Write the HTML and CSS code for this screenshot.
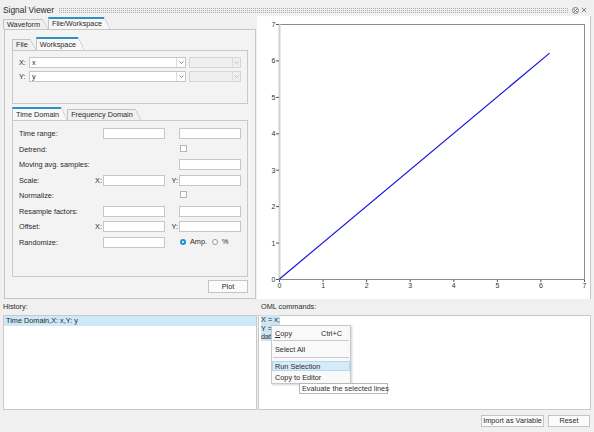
FILE: index.html
```html
<!DOCTYPE html>
<html>
<head>
<meta charset="utf-8">
<title>Signal Viewer</title>
<link rel="stylesheet" href="styles.css">
</head>
<body>
<div class="app">
  <header class="titlebar">
    <span class="title">Signal Viewer</span>
    <span class="grip"></span>
    <svg class="ticon" width="7" height="7" viewBox="0 0 7 7"><circle cx="3.5" cy="3.5" r="3" fill="none" stroke="#707070" stroke-width="0.9"/><path d="M2 2 L5 5 M5 2 L2 5" stroke="#707070" stroke-width="0.9"/></svg>
    <svg class="ticon close" width="6" height="6" viewBox="0 0 6 6"><path d="M0.8 0.8 L5.2 5.2 M5.2 0.8 L0.8 5.2" stroke="#707070" stroke-width="0.9"/></svg>
  </header>

  <div class="main">
    <section class="left">
      <div class="tabrow outer-tabs">
        <div class="tab">Waveform</div>
        <div class="tab active">File/Workspace</div>
      </div>
      <div class="opane">
        <div class="tabrow inner-tabs">
          <div class="tab">File</div>
          <div class="tab active">Workspace</div>
        </div>
        <div class="wspane">
          <div class="wsrow">
            <span class="lbl">X:</span>
            <div class="combo"><span class="cval">x</span><span class="arr"><svg width="5" height="3" viewBox="0 0 5 3"><path d="M0.5 0.5 L2.5 2.5 L4.5 0.5" fill="none" stroke="#707070" stroke-width="0.8"/></svg></span></div>
            <div class="combo dis"><span class="cval"></span><span class="arr"><svg width="5" height="3" viewBox="0 0 5 3"><path d="M0.5 0.5 L2.5 2.5 L4.5 0.5" fill="none" stroke="#b0b0b0" stroke-width="0.8"/></svg></span></div>
          </div>
          <div class="wsrow">
            <span class="lbl">Y:</span>
            <div class="combo"><span class="cval">y</span><span class="arr"><svg width="5" height="3" viewBox="0 0 5 3"><path d="M0.5 0.5 L2.5 2.5 L4.5 0.5" fill="none" stroke="#707070" stroke-width="0.8"/></svg></span></div>
            <div class="combo dis"><span class="cval"></span><span class="arr"><svg width="5" height="3" viewBox="0 0 5 3"><path d="M0.5 0.5 L2.5 2.5 L4.5 0.5" fill="none" stroke="#b0b0b0" stroke-width="0.8"/></svg></span></div>
          </div>
        </div>

        <div class="tabrow inner-tabs td-tabs">
          <div class="tab active">Time Domain</div>
          <div class="tab">Frequency Domain</div>
        </div>
        <div class="tdpane">
          <div class="tdgrid">
            <span class="lbl">Time range:</span>
            <span class="inp c3"></span><span class="inp c5"></span>

            <span class="lbl">Detrend:</span>
            <span class="chk c5"></span>

            <span class="lbl">Moving avg. samples:</span>
            <span class="inp c5"></span>

            <span class="lbl">Scale:</span>
            <span class="axl c2">X:</span><span class="inp c3"></span><span class="axl c4">Y:</span><span class="inp c5"></span>

            <span class="lbl">Normalize:</span>
            <span class="chk c5"></span>

            <span class="lbl">Resample factors:</span>
            <span class="inp c3"></span><span class="inp c5"></span>

            <span class="lbl">Offset:</span>
            <span class="axl c2">X:</span><span class="inp c3"></span><span class="axl c4">Y:</span><span class="inp c5"></span>

            <span class="lbl">Randomize:</span>
            <span class="inp c3"></span>
            <span class="radios c5"><span class="radio on"></span><span class="rtxt">Amp.</span><span class="radio"></span><span class="rtxt">%</span></span>
          </div>
        </div>
        <div class="btnrow"><button class="btn plotbtn">Plot</button></div>
      </div>
    </section>

    <section class="plot">
      <svg width="333" height="283" viewBox="0 0 333 283" font-family="Liberation Sans, Arial, sans-serif" font-size="7" fill="#333">
        <rect x="22.5" y="8.5" width="305" height="255" fill="#fff" stroke="#8c8c8c" stroke-width="1"/>
        <line x1="22.5" y1="8" x2="22.5" y2="263" stroke="#cfcfcf" stroke-width="2"/>
        <g stroke="#555" stroke-width="1">
          <line x1="19" y1="8.5" x2="22" y2="8.5"/>
          <line x1="19" y1="44.9" x2="22" y2="44.9"/>
          <line x1="19" y1="81.4" x2="22" y2="81.4"/>
          <line x1="19" y1="117.8" x2="22" y2="117.8"/>
          <line x1="19" y1="154.2" x2="22" y2="154.2"/>
          <line x1="19" y1="190.6" x2="22" y2="190.6"/>
          <line x1="19" y1="227.1" x2="22" y2="227.1"/>
          <line x1="19" y1="263.5" x2="22" y2="263.5"/>
          <line x1="22.5" y1="264" x2="22.5" y2="266"/>
          <line x1="66.1" y1="264" x2="66.1" y2="266"/>
          <line x1="109.6" y1="264" x2="109.6" y2="266"/>
          <line x1="153.2" y1="264" x2="153.2" y2="266"/>
          <line x1="196.8" y1="264" x2="196.8" y2="266"/>
          <line x1="240.4" y1="264" x2="240.4" y2="266"/>
          <line x1="283.9" y1="264" x2="283.9" y2="266"/>
          <line x1="327.5" y1="264" x2="327.5" y2="266"/>
        </g>
        <g text-anchor="end">
          <text x="18.5" y="11">7</text>
          <text x="18.5" y="47.4">6</text>
          <text x="18.5" y="83.9">5</text>
          <text x="18.5" y="120.3">4</text>
          <text x="18.5" y="156.7">3</text>
          <text x="18.5" y="193.1">2</text>
          <text x="18.5" y="229.6">1</text>
          <text x="18.5" y="266">0</text>
        </g>
        <g text-anchor="middle">
          <text x="22.5" y="272">0</text>
          <text x="66.1" y="272">1</text>
          <text x="109.6" y="272">2</text>
          <text x="153.2" y="272">3</text>
          <text x="196.8" y="272">4</text>
          <text x="240.4" y="272">5</text>
          <text x="283.9" y="272">6</text>
          <text x="327.5" y="272">7</text>
        </g>
        <line x1="22.5" y1="263" x2="292.6" y2="37.1" stroke="#1717e0" stroke-width="1.2"/>
      </svg>
    </section>
    <div class="edge"></div>
  </div>

  <div class="bottom">
    <div class="col hist">
      <div class="cap">History:</div>
      <div class="box">
        <div class="hrow sel">Time Domain,X: x,Y: y</div>
      </div>
    </div>
    <div class="col oml">
      <div class="cap">OML commands:</div>
      <div class="box code">
        <div class="ln"><span class="hl">X = x;</span></div>
        <div class="ln"><span class="hl">Y = y;</span></div>
        <div class="ln"><span class="hl">data = [X, Y];</span></div>

        <div class="menu">
          <div class="mi"><span><u>C</u>opy</span><span>Ctrl+C</span></div>
          <div class="sep"></div>
          <div class="mi"><span>Select All</span></div>
          <div class="sep"></div>
          <div class="mi hot"><span>Run Selection</span></div>
          <div class="mi last"><span>Copy to Editor</span></div>
        </div>
        <div class="tip">Evaluate the selected lines</div>
      </div>
    </div>
  </div>

  <div class="footer">
    <button class="btn importbtn">Import as Variable</button>
    <button class="btn resetbtn">Reset</button>
  </div>
</div>
</body>
</html>
```

FILE: styles.css
```css
* { box-sizing: border-box; margin: 0; padding: 0; }
html, body { width: 594px; height: 432px; overflow: hidden; }
body {
  background: #f0f0f0;
  font-family: "Liberation Sans", Arial, sans-serif;
  font-size: 7.3px;
  color: #2a2a2a;
  line-height: 1;
}
.app { display: flex; flex-direction: column; height: 432px; }

/* title bar */
.titlebar { height: 16px; display: flex; align-items: flex-start; padding: 0 7px 0 3px; }
.title { font-size: 8.4px; margin-top: 6px; color: #2a2a2a; }
.grip {
  flex: 1;
  height: 6px;
  margin: 7px 4px 0 4px;
  background-color: #a8a8a8;
  background-image: linear-gradient(90deg, #f0f0f0 1px, transparent 1px), linear-gradient(#f0f0f0 1px, transparent 1px);
  background-size: 2px 2px;
}
.ticon { margin-top: 6.5px; }
.ticon.close { margin-left: 2px; margin-top: 7px; }

/* main area */
.main { display: flex; height: 283px; }
.left { width: 257px; display: flex; flex-direction: column; }

.tabrow { display: flex; align-items: flex-end; height: 13px; }
.outer-tabs { margin-left: 3px; }
.tab {
  position: relative;
  height: 10px;
  line-height: 9px;
  padding: 0 2px 0 3px;
  margin-right: 6px;
  border: 1px solid #c3c3c3;
  border-right: 0;
  border-bottom: 0;
  background: #f0f0f0;
  color: #2a2a2a;
  white-space: nowrap;
}
.tab::after {
  content: "";
  position: absolute;
  top: -1px;
  bottom: 0;
  left: 100%;
  width: 6px;
  background: linear-gradient(to bottom left, transparent calc(50% - 0.6px), #c3c3c3 50%, #f0f0f0 calc(50% + 0.6px));
}
.tab.active {
  height: 12px;
  line-height: 10px;
  border-top: 2px solid #2f90c6;
  background: #f8f8f8;
}
.tab.active::after {
  top: -2px;
  background: linear-gradient(to bottom left, transparent calc(50% - 0.6px), #c3c3c3 50%, #f8f8f8 calc(50% + 0.6px));
}
.inner-tabs .tab { height: 11px; line-height: 10px; }
.inner-tabs .tab.active { height: 13px; line-height: 11px; }
.td-tabs { margin-top: 3px; }

.opane {
  margin-left: 4px;
  width: 252px;
  height: 270px;
  border: 1px solid #c6c6c6;
  background: #f3f3f3;
  padding: 7px 7px 5px 7px;
  display: flex;
  flex-direction: column;
}

/* workspace pane */
.wspane { height: 54px; border: 1px solid #c9c9c9; padding: 6px 6px 0 6px; }
.wsrow { display: flex; align-items: center; height: 11px; }
.wsrow + .wsrow { margin-top: 3px; }
.wsrow .lbl { width: 10px; }
.combo {
  width: 157px;
  height: 11px;
  background: #fff;
  border: 1px solid #c6c6c6;
  display: flex;
  align-items: center;
}
.cval { flex: 1; padding-left: 2px; line-height: 9px; }
.arr {
  width: 9px;
  height: 9px;
  border-left: 1px solid #dedede;
  display: flex;
  align-items: center;
  justify-content: center;
}
.combo.dis { width: 52px; margin-left: 3px; background: #efefef; border-color: #d6d6d6; }
.combo.dis .arr { width: 8px; border-left-color: #dddddd; }

/* time domain pane */
.tdpane { height: 157px; border: 1px solid #c9c9c9; padding: 7px 6px 0 6px; }
.tdgrid {
  display: grid;
  grid-template-columns: 74px 10px 62px 14px 62px;
  grid-auto-rows: 15.5px;
  align-items: start;
}
.tdgrid .lbl { grid-column: 1; line-height: 11px; height: 11px; white-space: nowrap; }
.c2 { grid-column: 2; }
.c3 { grid-column: 3; }
.c4 { grid-column: 4; }
.c5 { grid-column: 5; }
.axl { line-height: 11px; height: 11px; text-align: right; padding-right: 1px; }
.inp { display: block; height: 11px; background: #fff; border: 1px solid #c6c6c6; }
.chk { display: block; width: 7px; height: 7px; margin: 1px 0 0 1px; background: #fff; border: 1px solid #b4b4b4; }
.radios { display: flex; align-items: center; height: 11px; }
.radio { width: 6px; height: 6px; border-radius: 50%; border: 1px solid #9a9a9a; background: #fff; margin-left: 1px; }
.radio.on { border: 2px solid #1e8fd4; background: #fff; }
.radios .radio + .rtxt { margin-left: 4px; }
.radios .rtxt + .radio { margin-left: 5px; }

.btnrow { margin-top: 3px; height: 13px; display: flex; justify-content: flex-end; }
.btn {
  font-family: "Liberation Sans", Arial, sans-serif;
  font-size: 7.3px;
  color: #2a2a2a;
  background: #fbfbfb;
  border: 1px solid #c4c4c4;
  line-height: 1;
}
.plotbtn { width: 40px; height: 13px; }

/* plot */
.plot { width: 333px; height: 283px; background: #fff; }
.plot svg { display: block; }
.edge { width: 1px; background: #c4c4c4; }

/* bottom */
.bottom { display: flex; height: 111px; }
.col { display: flex; flex-direction: column; }
.hist { margin-left: 3px; width: 254px; }
.oml { margin-left: 1px; width: 333px; }
.cap { height: 14px; line-height: 15px; }
.oml .cap { padding-left: 3px; }
.box { margin-top: 2px; height: 95px; background: #fff; border: 1px solid #c9c9c9; position: relative; }
.hrow { height: 10px; line-height: 10px; padding-left: 2px; }
.hrow.sel { background: #cde8f7; }
.code { padding-left: 2px; }
.ln { height: 8.7px; line-height: 8.7px; white-space: nowrap; }
.hl { background: #cce6f6; }

.menu {
  position: absolute;
  left: 12px;
  top: 9px;
  width: 80px;
  padding-top: 2px;
  background: #f9f9f9;
  border: 1px solid #c8c8c8;
  box-shadow: 1px 1px 2px rgba(0, 0, 0, 0.18);
}
.mi { height: 10px; line-height: 10px; padding: 0 7px 0 2px; display: flex; justify-content: space-between; border: 1px solid transparent; }
.mi.hot { background: #d6ebf8; border-color: #b3d9f0; }
.mi.last { height: 11px; margin-top: 1px; }
.sep { height: 1px; background: #cacaca; margin: 2px 1px 3px 1px; }
.sep + .mi + .sep { margin-top: 3px; }

.tip {
  position: absolute;
  left: 40px;
  top: 67px;
  width: 89px;
  height: 11px;
  line-height: 9px;
  padding-left: 2px;
  background: #fff;
  border: 1px solid #b8b8b8;
  color: #333;
  white-space: nowrap;
}

/* footer */
.footer { height: 22px; display: flex; justify-content: flex-end; gap: 4px; padding: 5px 4px 0 0; }
.importbtn { width: 63px; height: 12px; }
.resetbtn { width: 42px; height: 12px; }
```
